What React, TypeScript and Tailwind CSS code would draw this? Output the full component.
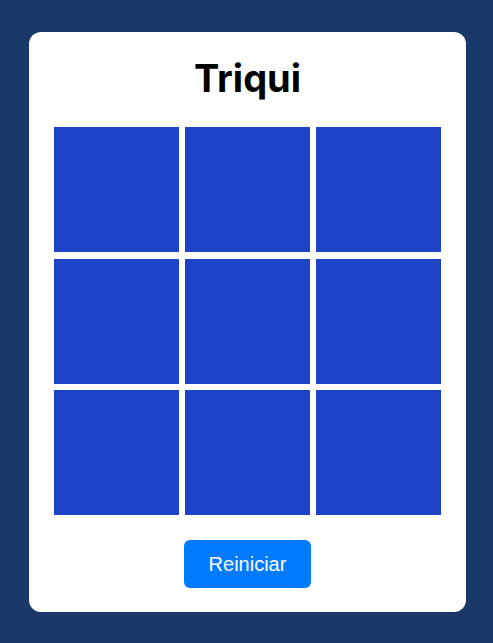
export default function App() {
  const cells = Array.from({ length: 9 }, (_, i) => i);

  return (
    <div className="min-h-screen w-full bg-[#1b386b] pt-[32px]">
      <div className="ml-[29px] w-[437px] rounded-[12px] bg-white px-[25px] pb-[24px] pt-[22px]">
        <h1 className="mb-[25px] text-center font-['Inter',sans-serif] text-[38px] font-bold leading-[48px] text-black">
          Triqui
        </h1>

        <div className="grid grid-cols-[repeat(3,125px)] gap-x-[6px] gap-y-[6.5px]">
          {cells.map((i) => (
            <button key={i} type="button" className="h-[125px] w-[125px] bg-[#1d43c9]" />
          ))}
        </div>

        <div className="mt-[25px] flex justify-center">
          <button
            type="button"
            className="h-[48px] w-[127px] rounded-[6px] bg-[#007bff] font-['Liberation_Sans',Arial,sans-serif] text-[20px] leading-[24px] text-white"
          >
            Reiniciar
          </button>
        </div>
      </div>
    </div>
  );
}
